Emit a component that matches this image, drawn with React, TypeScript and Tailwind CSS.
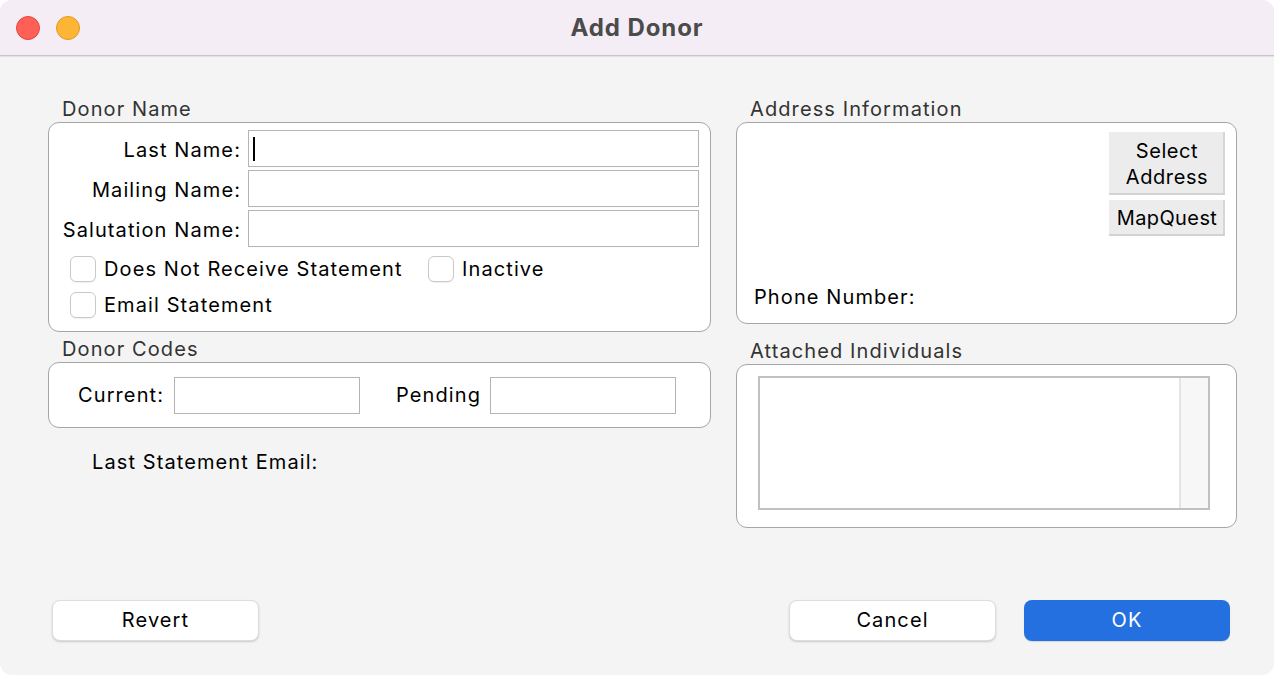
import React from "react";

const font = { fontFamily: "Inter, 'Noto Sans', 'Liberation Sans', sans-serif" };

function TextField({ className = "", caret = false }: { className?: string; caret?: boolean }) {
  return (
    <div className={`h-[37px] bg-white border border-[#b4b4b4] flex items-center ${className}`}>
      {caret && <div className="ml-[4px] w-[2px] h-[24px] bg-black" />}
    </div>
  );
}

function Checkbox({ label }: { label: string }) {
  return (
    <div className="flex items-center gap-[8px]">
      <div className="w-[26px] h-[26px] rounded-[6px] border border-[#c9c9c9] bg-white shadow-[0_1px_1px_rgba(0,0,0,0.06)]" />
      <span className="text-[20px] leading-[26px] pt-[1px] text-black">{label}</span>
    </div>
  );
}

function GroupLabel({ children }: { children: React.ReactNode }) {
  return <div className="pl-[14px] h-[26px] leading-[26px] pt-[1px] text-[20px] text-[#333333]">{children}</div>;
}

function PushButton({ children, primary = false }: { children: React.ReactNode; primary?: boolean }) {
  return (
    <button
      className={
        primary
          ? "w-[206px] h-[41px] rounded-[8px] bg-[#2470e1] text-white text-[20px] pb-[2px] shadow-[0_1px_1px_rgba(0,0,0,0.12)]"
          : "w-[207px] h-[41px] rounded-[8px] bg-white text-black text-[20px] pb-[2px] border border-[#dddddd] shadow-[0_1px_2px_rgba(0,0,0,0.18)]"
      }
    >
      {children}
    </button>
  );
}

export default function App() {
  return (
    <div className="w-[1274px] h-[676px] bg-white tracking-[1.1px]" style={font}>
      <div className="w-[1274px] h-[675px] rounded-[12px] overflow-hidden bg-[#f4f4f4] flex flex-col">
        {/* title bar */}
        <div className="relative h-[56px] bg-[#f4edf5] border-b border-[#c6c6c6] shadow-[0_1px_0_#e2e2e2] flex items-center justify-center shrink-0">
          <div className="absolute left-[16px] top-[16px] flex gap-[16px]">
            <div className="w-[24px] h-[24px] rounded-full bg-[#fe5f57] border border-[#e1483f]" />
            <div className="w-[24px] h-[24px] rounded-full bg-[#feb535] border border-[#e09a26]" />
          </div>
          <div className="text-[24px] font-bold text-[#4b4b4b] tracking-[0.9px] mt-[1px]">Add Donor</div>
        </div>

        {/* body */}
        <div className="flex-1 flex flex-col pt-[39px] pb-[34px]">
          <div className="flex gap-[25px] pl-[48px]">
            {/* left column */}
            <div className="w-[663px] flex flex-col">
              <GroupLabel>Donor Name</GroupLabel>
              <div className="mt-[1px] h-[210px] bg-white border border-[#a6a6a6] rounded-[11px] pt-[7px] pr-[11px]">
                <div className="flex flex-col gap-[3px]">
                  {[
                    ["Last Name:", true],
                    ["Mailing Name:", false],
                    ["Salutation Name:", false],
                  ].map(([label, caret]) => (
                    <div key={label as string} className="flex items-center">
                      <div className="w-[199px] pr-[7px] pt-[3px] text-right text-[20px] text-black">{label}</div>
                      <TextField className="flex-1" caret={caret as boolean} />
                    </div>
                  ))}
                </div>
                <div className="pl-[21px] mt-[8px] flex flex-col gap-[9px]">
                  <div className="flex">
                    <div className="w-[358px]">
                      <Checkbox label="Does Not Receive Statement" />
                    </div>
                    <Checkbox label="Inactive" />
                  </div>
                  <Checkbox label="Email Statement" />
                </div>
              </div>

              <div className="mt-[3px]">
                <GroupLabel>Donor Codes</GroupLabel>
              </div>
              <div className="mt-[1px] h-[66px] bg-white border border-[#a6a6a6] rounded-[11px] flex items-center pl-[29px]">
                <span className="text-[20px] text-black w-[96px]">Current:</span>
                <TextField className="w-[186px]" />
                <span className="text-[20px] text-black ml-[36px] w-[94px]">Pending</span>
                <TextField className="w-[186px]" />
              </div>

              <div className="mt-[21px] pl-[44px] text-[20px] leading-[26px] text-black">Last Statement Email:</div>
            </div>

            {/* right column */}
            <div className="w-[501px] flex flex-col">
              <GroupLabel>Address Information</GroupLabel>
              <div className="mt-[1px] h-[202px] bg-white border border-[#a6a6a6] rounded-[11px] flex flex-col pt-[9px] pr-[11px] pl-[17px] pb-[13px]">
                <div className="self-end flex flex-col gap-[5px] w-[116px]">
                  <button className="h-[63px] pt-[3px] bg-[#ececec] border-b-2 border-[#d3d3d3] shadow-[inset_-2px_0_0_#d6d6d6] text-[20px] leading-[26px] tracking-[0.6px] text-black">
                    Select
                    <br />
                    Address
                  </button>
                  <button className="h-[36px] pt-[1px] bg-[#ececec] border-b-2 border-[#d3d3d3] shadow-[inset_-2px_0_0_#d6d6d6] text-[20px] leading-[26px] tracking-[0.4px] text-black">
                    MapQuest
                  </button>
                </div>
                <div className="mt-auto text-[20px] leading-[26px] text-black">Phone Number:</div>
              </div>

              <div className="mt-[13px]">
                <GroupLabel>Attached Individuals</GroupLabel>
              </div>
              <div className="mt-[1px] h-[164px] bg-white border border-[#a6a6a6] rounded-[11px] pt-[11px] pl-[21px] pr-[26px]">
                <div className="h-[134px] border-2 border-[#c0c0c0] flex">
                  <div className="flex-1 bg-white" />
                  <div className="w-[29px] bg-[#f7f7f7] border-l-2 border-[#e4e4e4]" />
                </div>
              </div>
            </div>
          </div>

          {/* dialog buttons */}
          <div className="mt-auto flex items-center pl-[52px] pr-[44px]">
            <PushButton>Revert</PushButton>
            <div className="ml-auto flex gap-[28px]">
              <PushButton>Cancel</PushButton>
              <PushButton primary>OK</PushButton>
            </div>
          </div>
        </div>
      </div>
    </div>
  );
}
